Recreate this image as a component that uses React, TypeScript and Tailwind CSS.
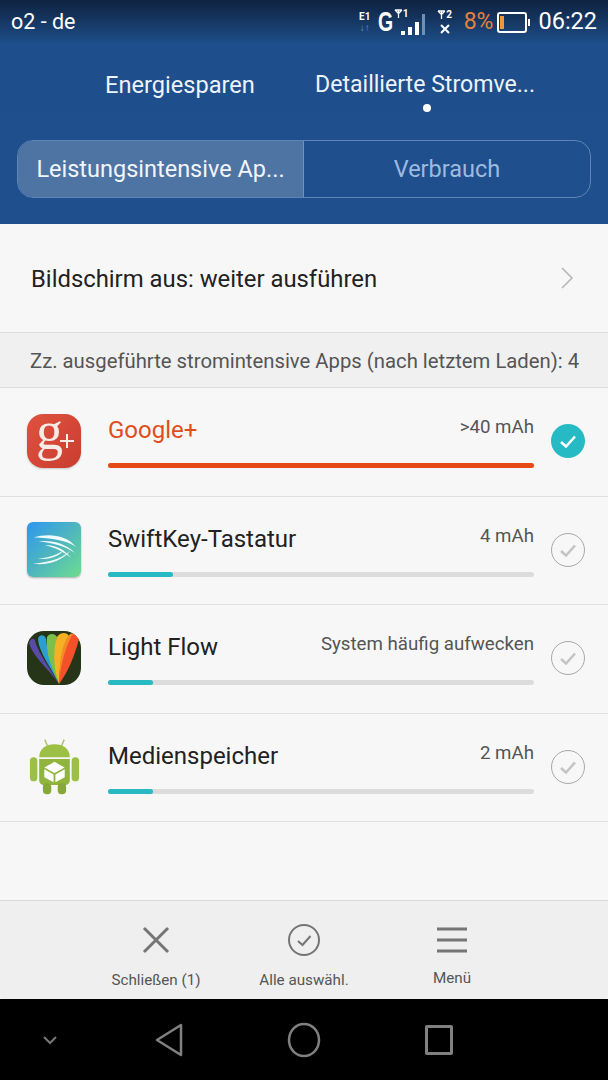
const apps = [
  { name: "Google+", value: ">40 mAh", pct: 100, active: true, icon: <GooglePlusIcon /> },
  { name: "SwiftKey-Tastatur", value: "4 mAh", pct: 15.3, active: false, icon: <SwiftKeyIcon /> },
  { name: "Light Flow", value: "System häufig aufwecken", pct: 10.6, active: false, icon: <LightFlowIcon /> },
  { name: "Medienspeicher", value: "2 mAh", pct: 10.6, active: false, icon: <AndroidIcon /> },
];

function GooglePlusIcon() {
  return (
    <div className="relative h-[54px] w-[54px] rounded-[16px] bg-gradient-to-br from-[#e0523f] to-[#c93d30] shadow-[0_1px_2px_rgba(0,0,0,0.2)]">
      <span className="absolute left-[9px] top-0 text-[54px] leading-[34px] text-[#f7ebe6] [font-family:'Liberation_Serif',serif]">
        g
      </span>
      <svg viewBox="0 0 54 54" className="absolute inset-0 h-full w-full" fill="none">
        <path d="M40 20v14M33 27h14" stroke="#f7e9e4" strokeWidth="2" />
      </svg>
    </div>
  );
}

function SwiftKeyIcon() {
  return (
    <div className="h-[55px] w-[55px] overflow-hidden rounded-[6px] bg-gradient-to-br from-[#2f95f0] via-[#4fb6bd] to-[#6fdc8c] shadow-[0_1px_2px_rgba(0,0,0,0.3)]">
      <svg viewBox="0 0 55 55" className="h-full w-full" fill="#f2fbfb">
        <path d="M7 15c14-4 33-3 43 10-9-7-25-9-43-10z" />
        <path d="M12 19c12-1 26 1 37 12-10-7-22-10-37-12z" />
        <path d="M18 23c11 0 19 4 27 13-8-6-15-10-27-13z" />
        <path d="M6 42c13-1 28-4 38-13-8 10-23 15-38 13z" />
        <path d="M11 37c9-1 18-3 27-9-6 7-16 10-27 9z" />
      </svg>
    </div>
  );
}

function LightFlowIcon() {
  return (
    <div className="h-[54px] w-[54px] overflow-hidden rounded-[17px] bg-[#263418]">
      <svg viewBox="0 0 54 54" className="h-full w-full">
        <path d="M32 53C22 38 6 26 2 12 3 8 7 6 8 10c4 14 16 28 24 43z" fill="#5a4aa8" />
        <path d="M32 53C24 36 12 22 11 8c1-5 7-5 8 0 1 14 7 30 13 45z" fill="#2a9fd0" />
        <path d="M32 53C24 36 18 20 20 6c2-4 8-4 10 0-2 16-2 32 2 47z" fill="#7cbf4a" />
        <path d="M32 53c-6-17-6-35-2-47 3-5 10-5 12-1-6 15-10 31-10 48z" fill="#f6b023" />
        <path d="M32 53c0-19 2-39 10-49 4-3 6-1 7 2-4 17-9 33-17 47z" fill="#f58a24" />
        <path d="M32 53c1-17 6-36 13-49 4-2 7 0 7 4-4 16-11 33-20 45z" fill="#f4512a" />
      </svg>
    </div>
  );
}

function AndroidIcon() {
  return (
    <div className="h-[59px] w-[51px]">
      <svg viewBox="0 0 55 60" className="h-full w-full">
        <path d="M17 1l3 7M38 1l-3 7" stroke="#a8c267" strokeWidth="1.500" />
        <path d="M11 20c0-9 7-14 16.500-14S44 11 44 20z" fill="#9cc045" />
        <rect x="1" y="20" width="8" height="26" rx="4" fill="#9cc045" />
        <rect x="46" y="20" width="8" height="26" rx="4" fill="#9cc045" />
        <path d="M11 22h33v23a5 5 0 0 1-5 5H16a5 5 0 0 1-5-5z" fill="#8fb53c" />
        <rect x="15" y="48" width="9" height="12" rx="4" fill="#86a935" />
        <rect x="31" y="48" width="9" height="12" rx="4" fill="#86a935" />
        <path d="M27.500 25l11 6-11 6-11-6z" fill="#fff" />
        <path d="M16.500 33l10 5.500V47l-10-5.500zM38.500 33l-10 5.500V47l10-5.500z" fill="#fff" />
      </svg>
    </div>
  );
}

function Antenna() {
  return (
    <svg viewBox="0 0 9 9" className="h-[9px] w-[9px]" fill="none" stroke="#fff" strokeWidth="1.300">
      <path d="M1 1h7M1 1l3.500 3.500L8 1M4.500 1v8" />
    </svg>
  );
}

function StatusBar() {
  return (
    <div className="flex h-[44px] items-center justify-between pl-[11px] pr-[11px] text-white">
      <span className="text-[21.500px]">o2 - de</span>
      <div className="flex items-center">
        <div className="flex w-[14px] flex-col items-center">
          <span className="text-[10px] font-bold leading-[12px]">E1</span>
          <span className="text-[10px] leading-[10px] text-[#6f96c4]">↓↑</span>
        </div>
        <span className="ml-[6px] w-[14px] origin-left scale-x-[0.72] text-[27px] font-bold leading-none [font-family:'Liberation_Sans',sans-serif]">
          G
        </span>
        <div className="relative ml-[2px] h-[26px] w-[32px]">
          <div className="absolute left-0 top-0 flex items-start">
            <Antenna />
            <span className="text-[10px] font-bold leading-[10px]">1</span>
          </div>
          <div className="absolute bottom-0 left-[7px] flex items-end gap-[3px]">
            <div className="h-[4px] w-[4px] bg-white" />
            <div className="h-[8px] w-[4px] bg-white" />
            <div className="h-[13px] w-[4px] bg-white" />
            <div className="h-[21px] w-[3px] bg-[#6f8fb8]" />
          </div>
        </div>
        <div className="ml-[12px] flex w-[14px] flex-col items-center">
          <div className="flex items-start">
            <Antenna />
            <span className="text-[10px] font-bold leading-[10px]">2</span>
          </div>
          <svg viewBox="0 0 10 10" className="mt-[4px] h-[10px] w-[10px]" stroke="#fff" strokeWidth="2">
            <path d="M1 1l8 8M9 1l-8 8" />
          </svg>
        </div>
        <span className="ml-[12px] text-[23px] text-[#e8803a]">8%</span>
        <div className="relative ml-[4px] mr-[3px] h-[21px] w-[30px] rounded-[3px] border-2 border-white">
          <div className="absolute bottom-[2px] left-[1px] top-[2px] w-[4px] bg-[#f0973a]" />
          <div className="absolute -right-[5px] top-[5px] h-[7px] w-[2px] bg-white" />
        </div>
        <span className="ml-[8px] text-[23.500px]">06:22</span>
      </div>
    </div>
  );
}

function AppRow({ app }: { app: (typeof apps)[number] }) {
  return (
    <div className="flex h-[108.500px] border-b border-[#e0e0e0] pl-[27px]">
      <div className="flex h-[108px] w-[54px] items-center justify-center pb-[2px]">{app.icon}</div>
      <div className="ml-[27px] w-[426px] pt-[22px]">
        <div className="flex h-[41px] items-start justify-between">
          <span className={`text-[24px] leading-[40px] ${app.active ? "text-[#e04e1c]" : "text-[#222222]"}`}>
            {app.name}
          </span>
          <span className="text-[18.700px] leading-[34px] text-[#555555]">{app.value}</span>
        </div>
        <div className="mt-[12px] h-[5px] w-full rounded-full bg-[#dcdcdc]">
          <div
            className={`h-full rounded-full ${app.active ? "bg-[#e64a14]" : "bg-[#28b9c2]"}`}
            style={{ width: `${app.pct}%` }}
          />
        </div>
      </div>
      <div className="ml-[17px] flex h-[108px] items-center pb-[2px]">
        {app.active ? (
          <div className="flex h-[34px] w-[34px] items-center justify-center rounded-full bg-[#26bbc4]">
            <svg viewBox="0 0 34 34" className="h-[34px] w-[34px]" fill="none" stroke="#fff" strokeWidth="2.600">
              <path d="M10 18l5 4.500 9-10" />
            </svg>
          </div>
        ) : (
          <div className="flex h-[34px] w-[34px] items-center justify-center rounded-full border border-[#a8a8a8]">
            <svg viewBox="0 0 32 32" className="h-[32px] w-[32px]" fill="none" stroke="#c4c4c4" strokeWidth="2.600">
              <path d="M9 17l5 4.500 9-10" />
            </svg>
          </div>
        )}
      </div>
    </div>
  );
}

function ToolItem({ label, icon, labelClass }: { label: string; icon: React.ReactNode; labelClass: string }) {
  return (
    <div className="flex w-[148px] flex-col items-center">
      <div className="flex h-[36px] w-[36px] items-center justify-center">{icon}</div>
      <span className={`text-[15.200px] leading-[20px] text-[#555555] ${labelClass}`}>{label}</span>
    </div>
  );
}

export default function App() {
  return (
    <div className="flex h-[1080px] w-[608px] flex-col overflow-hidden bg-[#f7f7f7] [font-family:Roboto,sans-serif]">
      <div className="h-[224px] bg-gradient-to-b from-[#0e2340] via-[#1e4f8c] via-[20%] to-[#1f4f8c]">
        <StatusBar />
        <div className="flex h-[74px] pl-[105px] pt-[25px] leading-[32px] text-[#eef3f9]">
          <span className="w-[210px] text-[23.600px]">Energiesparen</span>
          <div className="relative text-[23.100px]">
            <span>Detaillierte Stromve...</span>
            <div className="absolute left-[108px] top-[35px] h-[8px] w-[8px] rounded-full bg-white" />
          </div>
        </div>
        <div className="ml-[17px] mt-[22px] flex h-[58px] w-[574px] overflow-hidden rounded-[16px] border border-[#5d85b7] pt-0 text-[23.500px]">
          <div className="flex w-[286px] items-center justify-center border-r border-[#6f93c0] bg-[#4e74a4] pt-[2px] text-[#f2f5f9]">
            Leistungsintensive Ap...
          </div>
          <div className="flex flex-1 items-center justify-center pt-[2px] text-[#9dbbe0]">Verbrauch</div>
        </div>
      </div>

      <div className="flex h-[109px] items-center justify-between border-b border-[#dcdcdc] pl-[31px] pr-[34px] pt-[3px]">
        <span className="text-[23.850px] text-[#222222]">Bildschirm aus: weiter ausführen</span>
        <svg viewBox="0 0 14 24" className="mb-[3px] h-[24px] w-[14px]" fill="none" stroke="#b5b5b5" strokeWidth="1.500">
          <path d="M2 2l10 10L2 22" />
        </svg>
      </div>
      <div className="flex h-[55px] items-center whitespace-nowrap border-b border-[#dedede] bg-[#f0f0f0] pl-[30px] pt-[2px] text-[20.300px] text-[#555555]">
        Zz. ausgeführte stromintensive Apps (nach letztem Laden): 4
      </div>

      <div className="flex-1">
        {apps.map((app) => (
          <AppRow key={app.name} app={app} />
        ))}
      </div>

      <div className="flex h-[99px] justify-center rounded-b-[4px] border-t border-[#d8d8d8] bg-[#efefef] pt-[21px]">
        <ToolItem
          label="Schließen (1)"
          labelClass="mt-[12px]"
          icon={
            <svg viewBox="0 0 36 36" className="h-[36px] w-[36px]" fill="none" stroke="#757575" strokeWidth="3">
              <path d="M6 6l24 24M30 6L6 30" />
            </svg>
          }
        />
        <ToolItem
          label="Alle auswähl."
          labelClass="mt-[12px]"
          icon={
            <svg viewBox="0 0 36 36" className="h-[36px] w-[36px]" fill="none" stroke="#757575" strokeWidth="2">
              <circle cx="18" cy="18" r="15" />
              <path d="M12 19l4.500 4 8-9" />
            </svg>
          }
        />
        <ToolItem
          label="Menü"
          labelClass="mt-[10px]"
          icon={
            <svg viewBox="0 0 36 36" className="h-[36px] w-[36px]" fill="none" stroke="#757575" strokeWidth="3">
              <path d="M3 7h30M3 18h30M3 29h30" />
            </svg>
          }
        />
      </div>

      <div className="flex h-[81px] items-center bg-black">
        <svg viewBox="0 0 16 10" className="ml-[42px] h-[10px] w-[16px]" fill="none" stroke="#777777" strokeWidth="2">
          <path d="M2 2l6 6 6-6" />
        </svg>
        <svg viewBox="0 0 28 34" className="ml-[97px] h-[34px] w-[28px]" fill="none" stroke="#808080" strokeWidth="2.500" strokeLinejoin="round">
          <path d="M26 2v30L2 17z" />
        </svg>
        <svg viewBox="0 0 34 36" className="ml-[104px] h-[36px] w-[34px]" fill="none" stroke="#808080" strokeWidth="2.500">
          <ellipse cx="17" cy="18" rx="15" ry="16" />
        </svg>
        <div className="ml-[104px] h-[30px] w-[28px] rounded-[2px] border-[3px] border-[#808080]" />
      </div>
    </div>
  );
}
